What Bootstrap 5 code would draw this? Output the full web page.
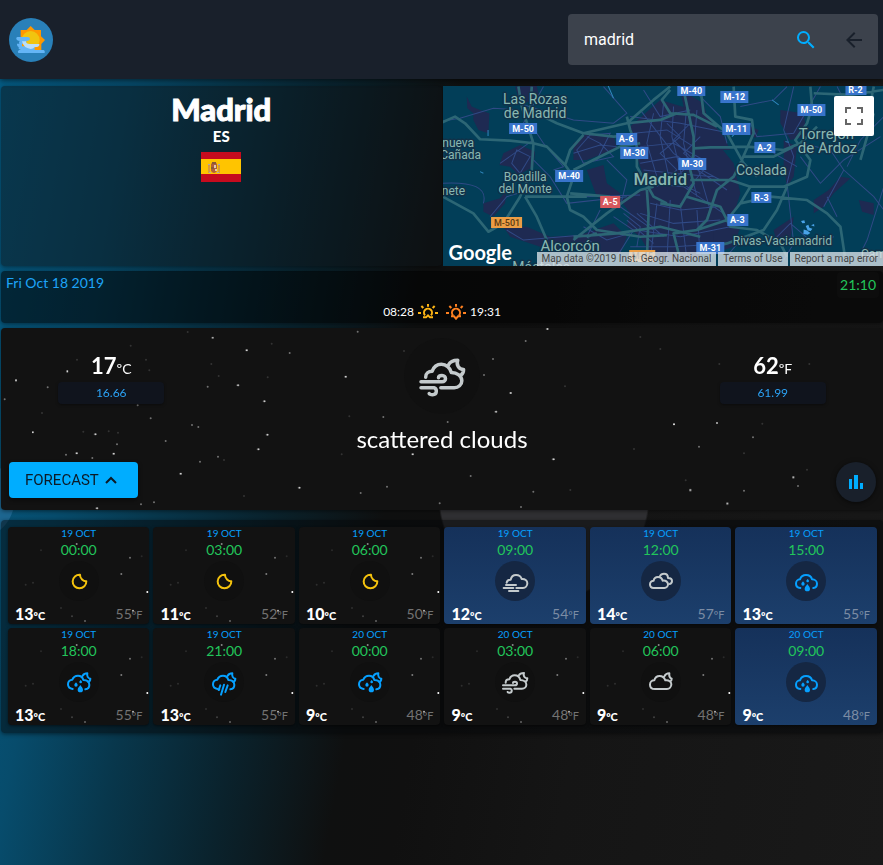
<!DOCTYPE html>
<html lang="en">
<head>
<meta charset="utf-8">
<meta name="viewport" content="width=device-width, initial-scale=1">
<title>Weather – Madrid</title>
<link href="https://cdn.jsdelivr.net/npm/bootstrap@5.3.0/dist/css/bootstrap.min.css" rel="stylesheet">
<style>
body{min-height:100vh;font-family:Lato,sans-serif;color:#fff;background:#0f0f0f}
.sky{padding-top:7px;background:
  radial-gradient(circle at 544px 416px,#303033 0,#303033 104px,transparent 106px),
  radial-gradient(circle at -26px 420px,#1d6690 0,#1d6690 40px,transparent 41px),
  linear-gradient(100deg,#055d86 0,#074c6c 130px,#08374c 230px,#0a222c 345px,#0f1010 455px,#101010 520px,#151515 680px,#191919 100%)}
.topbar{min-height:79px;background:#19202b;box-shadow:0 2px 5px rgba(0,0,0,.5);padding:14px 5px 14px 9px;position:relative}
.searchbox{width:310px;height:51px;background:#3c424c;border-radius:4px;padding:0 12px 0 16px}
.searchbox input{font:400 16px/24px Roboto,sans-serif;background:none;border:0;color:#fff;outline:0;min-width:0}
.plain{background:none;border:0;padding:0;line-height:0}
.panel{border-radius:4px;margin:0 0 5px 1px;box-shadow:0 1px 4px rgba(0,0,0,.5)}
.place-panel{background:rgba(12,18,22,.5);height:180px;padding-top:6px}
.city{font-size:31px;line-height:34px;font-weight:900;-webkit-text-stroke:1px #fff;margin:0}
.country{font-size:15px;line-height:20px;font-weight:900;margin:0 0 6px}
.mapbox{height:180px;position:relative;overflow:hidden;background:#023e58;font-family:Roboto,sans-serif;margin-left:1px}
.map-full{position:absolute;right:9px;top:10px;width:40px;height:40px;background:#fff;border:0;border-radius:2px;padding:0;line-height:0}
.map-logo{position:absolute;left:6px;bottom:2px;font:700 20px/24px Lato,sans-serif;color:#fff}
.map-credit{position:absolute;right:0;bottom:0;gap:2px;font-size:10px;line-height:14px;white-space:nowrap}
.map-credit>*{background:rgba(225,231,236,.76);color:#444;padding:0 5px;text-decoration:none}
.day-panel{background:rgba(0,0,0,.56);height:52px}
.today{font-size:14px;line-height:24px;color:#1ea4f8;padding-left:5px}
.clock{font-size:14px;line-height:26px;color:#22c55b;background:#0d0d0d;border-radius:4px;padding:0 3px;margin:1px 4px 0 0}
.suntimes{font-size:12px;line-height:18px;margin-top:5px;gap:4px}
.day-top{height:27px}
.night{background:#121212;position:relative;overflow:hidden}
.stars{position:absolute;left:0;top:0;width:882px;height:182px;pointer-events:none}
.stars circle,#tilestars circle{r:3px}
.tile .stars{width:142px;height:97px}
.now-panel{margin-bottom:10px}
.deg{font-size:22px;line-height:24px;font-weight:700;margin-top:26px}
.deg small{font-size:14px;font-weight:400}
.exact{width:48%;background:#10141d;border-radius:4px;color:#2ba2f5;font-size:12px;line-height:22px;margin-top:1px;box-shadow:0 1px 3px rgba(0,0,0,.4)}
.now-icon{width:76px;height:76px;border-radius:50%;background:#101010;margin-top:10px}
.summary{font-size:24px;line-height:36px;margin-top:7px}
.tools{padding:5px 7px 8px 8px}
.btn-forecast{background:#00adff;border:0;border-radius:4px;height:36px;padding:0 20px 0 16px;gap:5px;color:#0c1a26;font:400 15px/36px Roboto,sans-serif;box-shadow:0 2px 4px rgba(0,0,0,.5)}
.btn-stats{width:40px;height:40px;border-radius:50%;background:#19202b;border:0;padding:0;line-height:0;box-shadow:0 1px 5px rgba(0,0,0,.6)}
.forecast{background:rgba(4,6,8,.5);padding:7px 6px 8px 7px}
.tile{height:97px;border-radius:4px;text-align:center;box-shadow:0 1px 3px rgba(0,0,0,.5)}
.tile.day{background:linear-gradient(#15315a,#1c3f6c);position:relative}
.tile .on{font-size:10px;line-height:12px;color:#06a0ff}
.tile .at{font-size:14px;line-height:21px;color:#22c55b}
.disc{width:40px;height:40px;border-radius:50%;margin:1px auto 3px;background:#101010;line-height:0}
.day .disc{background:#152743}
.temps{padding:0 7px;line-height:20px;position:relative}
.tc{font-size:16px;font-weight:900}
.tc small,.tf small{font-size:11px}
.tf{font-size:14px;color:#737373}
.day .tf{color:#7b8ca4}
.ico{fill:none;stroke:currentColor;stroke-width:6;stroke-linecap:round;stroke-linejoin:round;position:relative}
.c-moon{color:#f4c20d}.c-rain{color:#06a0ff}.c-cloud{color:#c4cacc}
</style>
<script src="https://cdn.jsdelivr.net/npm/bootstrap@5.3.0/dist/js/bootstrap.bundle.min.js"></script>
</head>
<body class="d-flex flex-column">

<svg width="0" height="0" class="position-absolute" aria-hidden="true">
  <symbol id="moon" viewBox="0 0 120 120"><path d="M63 41A20.500 20.500 0 1 0 82 61C74 62 62 52 63 41z"/></symbol>
  <symbol id="fog" viewBox="0 0 120 120"><path d="M35 65C36 58 42 56 47 56C49 47 56 42 63 42C71 42 78 47 80 54C90 53 97 59 97 67C97 75 91 81 84 81H64M33 72H63M26 81H55M42 90H70"/></symbol>
  <symbol id="clouds" viewBox="0 0 120 120"><path d="M38 81C31 81 27 76 27 70C27 64 32 59 38 59C39 52 45 48 51 48C58 48 63 52 65 59C74 57 81 63 81 70C81 76 76 81 70 81ZM57 45C59 40 64 38 69 38C76 38 81 43 81 51C88 51 93 55 93 60C93 65 90 68 86 69"/></symbol>
  <symbol id="drops" viewBox="0 0 120 120"><g fill="currentColor" stroke="none"><path d="M64 69c3 5 8 9 8 14a8 8 0 0 1-16 0c0-5 5-9 8-14z"/><path d="M51 61c2 3 5 5 5 8a5 5 0 0 1-10 0c0-3 3-5 5-8z"/><path d="M65 54c2 2 4 4 4 6a4 4 0 0 1-8 0c0-2 2-4 4-6z"/></g></symbol>
  <symbol id="rain" viewBox="0 0 120 120"><path d="M43 81C35 80 30 75 30 68C30 61 35 55 42 55C45 46 52 42 60 42C69 42 76 47 78 55C87 55 93 61 93 68C93 75 89 80 82 81"/><use href="#drops"/></symbol>
  <symbol id="nightcloud" viewBox="0 0 120 120"><path d="M41 81C32 80 27 74 27 67C27 59 33 53 40 53C43 45 50 41 57 41C65 41 71 46 73 54C83 54 91 59 91 69C91 76 87 81 79 82M71 41C74 36 79 34 85 34C83 42 87 49 94 50C94 55 91 59 87 60"/></symbol>
  <symbol id="nightrain" viewBox="0 0 120 120"><use href="#nightcloud"/><use href="#drops"/></symbol>
  <symbol id="nightshower" viewBox="0 0 120 120"><use href="#nightcloud"/><path d="M49 70L44 84M60 68L51 98M71 70L64 90M46 80L45 84"/></symbol>
  <symbol id="nightplain" viewBox="0 0 120 120"><path d="M42 81C32 81 27 75 27 68C27 60 33 55 40 55C42 46 49 42 56 42C64 42 70 47 73 55C84 53 91 60 91 67C91 75 85 81 78 81ZM70 43C73 37 79 34 85 34C84 42 87 48 92 50C92 54 90 57 88 59"/></symbol>
  <symbol id="wind" viewBox="0 0 120 120"><path d="M32 62C32 56 37 52 43 52C46 44 52 40 59 40C67 40 74 46 76 54C86 54 94 60 94 68C94 75 88 80 81 80H58M24 70H60C68 70 68 59 60 59C56 59 54 60 54 63M24 80H46C52 82 52 92 44 92C41 92 39 92 38 90M71 41C74 35 80 33 87 33C84 41 89 49 97 49C97 53 95 57 92 59"/></symbol>
  <symbol id="tilestars" viewBox="24 51 426 291">
    <g fill="#fff"><circle cx="230" cy="102" r="3" opacity=".5"/><circle cx="390" cy="143" r="3" opacity=".4"/><circle cx="425" cy="139" r="4" opacity=".1"/><circle cx="364" cy="192" r="3" opacity=".45"/><circle cx="442" cy="246" r="3"/><circle cx="399" cy="302" r="3" opacity=".7"/><circle cx="255" cy="333" r="3" opacity=".35"/><circle cx="77" cy="224" r="4" opacity=".12"/><circle cx="99" cy="218" r="3" opacity=".12"/><circle cx="123" cy="121" r="3" opacity=".1"/><circle cx="183" cy="294" r="3" opacity=".12"/><circle cx="216" cy="319" r="3" opacity=".2"/></g>
  </symbol>
</svg>

<header class="topbar d-flex align-items-start justify-content-between">
  <a href="#" aria-label="Weather home" class="lh-1">
    <svg width="44" height="44" viewBox="27 51 132 132" class="d-block mt-1">
      <circle cx="93" cy="117" r="66" fill="#2980b9"/>
      <path fill="#ff9800" d="M92 75L104 87H123V106L135 117L124 129V147H62V87H80Z"/>
      <circle cx="92" cy="117" r="27" fill="#f1c40f"/>
      <path fill="#64b5f6" d="M52 108H84Q91 109 90 115Q88 120 79 120V128H66V136H104V147H131Q136 149 134 156H55Q51 151 57 147H64Q54 145 56 139H60Q50 137 51 128H58Q55 121 61 120Q47 118 49 110Z"/>
      <path fill="#bbdefb" d="M66 121H78Q77 130 92 129H118Q119 137 110 138H104Q100 144 92 144Q70 141 66 121Z"/>
      <path fill="#2980b9" d="M90 156h5v2h-5z"/>
    </svg>
  </a>
  <form class="searchbox d-flex align-items-center" role="search" onsubmit="return false">
    <input type="text" value="madrid" aria-label="City" class="flex-grow-1 p-0">
    <button type="submit" class="plain me-4" aria-label="Search"><svg width="24" height="24" viewBox="0 0 24 24" fill="#00adff"><path d="M15.500 14h-.79l-.28-.27A6.470 6.470 0 0 0 16 9.500 6.500 6.500 0 1 0 9.500 16c1.610 0 3.090-.59 4.230-1.570l.27.28v.79l5 4.990L20.490 19l-4.990-5zm-6 0C7.010 14 5 11.990 5 9.500S7.010 5 9.500 5 14 7.010 14 9.500 11.990 14 9.500 14z"/></svg></button>
    <button type="button" class="plain" aria-label="Back"><svg width="24" height="24" viewBox="0 0 24 24" fill="#19202b"><path d="M20 11H7.830l5.590-5.590L12 4l-8 8 8 8 1.410-1.410L7.830 13H20v-2z"/></svg></button>
  </form>
</header>

<main class="sky flex-grow-1">
  <section class="row g-0">
    <div class="col-6">
      <div class="panel place-panel text-center">
        <h1 class="city">Madrid</h1>
        <p class="country">ES</p>
        <svg width="40" height="30" viewBox="0 0 40 30" role="img" aria-label="Flag of Spain" class="d-block mx-auto">
          <path fill="#c60b1e" d="M0 0h40v30H0z"/><path fill="#ffc400" d="M0 7h40v15H0z"/>
          <path fill="#d99a3a" d="M7 13h2v8H7zM17 13h2v8h-2z"/><path fill="#b0603a" d="M10 12q3-4 6 0v7q-3 4-6 0z"/><path fill="#e3c9b4" d="M13 13h2v3h-2zM14 17h2v2h-2z"/><path fill="#8a5a3a" d="M11 10h4v2h-4zM10 15h3v2h-3z"/><path fill="#a8a8b8" d="M7 12h2v1H7zM17 12h2v1h-2zM8 20h2v1H8zM16 20h2v1h-2z"/>
        </svg>
      </div>
    </div>
    <div class="col-6">
      <div class="mapbox">
        <svg width="100%" height="180" viewBox="0 0 440 180" preserveAspectRatio="xMidYMid slice" class="d-block" role="img" aria-label="Map of Madrid">
          <path fill="#023e58" d="M0 0h440v180H0z"/>
          <g transform="translate(-3 -6) scale(.3333)">
            <path fill="#1e2a52" d="M80 50L95 80L120 90L148 100L145 160L115 150L100 120L100 100L82 85ZM225 20L290 18L300 60L240 70ZM190 220L240 195L285 215L280 260L235 285L210 260L178 255ZM400 190L440 160L520 165L530 205L440 240L400 240ZM440 270L490 255L500 310L540 340L520 380L470 350ZM570 140L660 60L760 90L800 150L880 250L900 340L860 470L760 540L640 540L600 470L560 440L570 400L540 360L620 320L590 230ZM130 370L180 355L200 330L195 370L160 410L130 395ZM190 440L260 440L330 470L420 465L520 430L560 470L540 520L300 500L210 470Z"/>
            <path fill="#1e2a52" d="M720 30L790 70L800 110L850 170L870 210L800 210L740 130ZM930 140L955 150L945 175L925 160ZM1020 90L1090 100L1100 170L1050 180L1020 130ZM1030 180L1070 200L1060 290L1040 320L1030 260ZM1165 330L1200 290L1230 295L1180 340L1150 380L1120 400L1120 360ZM1255 360L1300 370L1300 405L1265 395ZM1000 450L1060 410L1050 480L1010 495ZM820 440L900 440L880 500L820 520Z"/>
            <g fill="none" stroke="#304a86" stroke-width="3">
              <path d="M0 125L60 115L160 85L235 90M235 70L400 120L520 130L560 100L490 20M130 370Q150 300 0 310M280 180L180 250M270 130L310 190L370 260L340 270M280 240L330 290L380 370L560 350M430 350L600 345M200 450L250 480L430 465M250 130L310 20M150 410L200 350L300 320M480 390L440 470L500 540M610 30L660 110L750 90M440 170L480 190L520 230L430 250L410 210L450 165L510 160L470 240M400 220L480 195L530 200M230 210L270 230L240 280L215 250ZM500 240L560 300L540 380L640 450"/>
              <path d="M570 110L720 130L870 160M600 90L700 220L860 330M580 160L680 150L760 200M600 200L700 190L790 240M600 250L710 230L840 300M610 270L700 280L820 290M620 310L730 320L850 400M640 100L620 190L650 290M670 70L660 170L690 310M700 80L695 170L730 310M740 70L730 190L770 350M770 90L760 220L810 390M630 370L720 390L830 380M600 400L700 430L840 420M590 450L720 470L870 440M570 500L700 500L860 490M650 370L630 540M690 360L680 540M720 370L740 540M770 390L780 530M560 420L640 490M590 400L670 470M860 190L840 110L760 30M550 400L600 440L590 500M520 410L580 450L530 530M430 440L500 480L570 460M680 130L720 170L660 220L710 270L650 320M750 130L700 180L760 240L700 300L780 340M780 170L730 220L790 270L740 330"/>
              <path d="M900 80L1000 60L1040 20M930 130L950 170L1060 160L1100 90L1140 20M1060 20L1030 150L1060 230L1040 310L1060 490L1030 540M1080 230L1140 310L1210 240L1320 170M1150 380L1210 270L1300 350L1330 390M1210 270L1170 210L1080 190M1300 160L1230 100L1190 20M1330 320L1280 480L1250 540M1000 480L1050 430L1120 490L1180 470M850 540L900 480L970 450M1330 110L1260 180L1220 260M1160 350L1190 410M1000 220L1070 260"/>
            </g>
            <g fill="none" stroke="#2c6675" stroke-width="8" stroke-linejoin="round">
              <path d="M0 130L45 110L75 130L120 178L210 182L280 190L320 200L375 255L400 290L380 350L390 390L430 410L470 450L600 470L680 465M235 20L245 80L280 190L275 270L240 350L190 430L145 455L100 400L0 345M275 20L270 90L350 130L430 160L520 170L590 165M430 160L560 130L640 60L690 20M375 255L390 210L430 165M400 270L470 235L540 200L600 190M255 350L440 350M255 350L290 410L320 480M400 480L500 400L600 330L640 320M440 470L470 460M560 110L570 150L590 200L590 260L640 350L680 370M560 130L660 120L710 100M620 330L625 400L620 540M510 350L390 340M400 470L530 460L660 440L780 470"/>
              <path d="M690 30L665 60L690 100L760 105L830 140M730 30L760 170L760 220L750 270L760 310L720 380L660 370M780 20L790 100L860 160L910 250L950 290M880 20L885 110L935 120L940 160L900 250L880 290L830 330L800 420L770 450L700 460L720 540M760 205L810 202L920 200L1030 210L1080 190L1130 140M1110 20L1115 80L1100 130L1065 180L1110 240L1100 290L1030 320L930 320L900 370L860 420L770 450M750 300L870 300L930 320M900 370L990 350L1100 360L1160 400L1200 440L1215 540M1040 320L1010 390L970 450L860 490L820 500L810 540M740 350L840 380L870 440L950 450L1020 490L1040 530M910 230L1000 230L1060 200M1300 100L1260 240M1120 40L1230 45L1330 30M1300 20L1280 120"/>
            </g>
            <path fill="none" stroke="#2f87bd" stroke-width="3" d="M504 18L520 55M144 150V168M120 275L130 280M995 60L1015 75M875 170L885 160M1035 185L1045 187"/>
            <path fill="#4aa3e8" d="M1082 423l10-2 2 8-8 1zM1096 438l8-4 3 9 9 3-5 7-9-2zM1090 448l10 3 10 8-8 5-13-2zM1112 436l9-4 1 7z"/>
          </g>
          <g fill="#8ab8b2" stroke="#113249" stroke-width="3" paint-order="stroke" stroke-linejoin="round" font-family="Roboto, sans-serif" text-anchor="middle">
            <g font-size="14"><text x="92" y="18">Las Rozas</text><text x="92" y="32">de Madrid</text><text x="318" y="89">Coslada</text></g>
            <g font-size="12"><text x="82" y="95">Boadilla</text><text x="82" y="107">del Monte</text><text x="339" y="159">Rivas-Vaciamadrid</text></g>
            <g font-size="12" text-anchor="end"><text x="31" y="61">nueva</text><text x="38" y="73">Cañada</text><text x="22" y="109">nete</text></g>
            <g font-size="15"><text x="383" y="53">Torrejón</text><text x="384" y="67">de Ardoz</text><text x="127" y="165">Alcorcón</text></g>
            <text x="217" y="99" font-size="17" font-weight="500">Madrid</text>
            <text x="430" y="172" font-size="12">Cam</text><text x="98" y="186" font-size="14">Móstoles</text>
          </g>
          <g fill="#3874cb"><path d="M234-1h28v11h-28zM277 5h28v12h-28zM66 37h28v11H66zM279 37h28v12h-28zM173 47h21v12h-21zM177 61h28v12h-28zM235 72h28v12h-28zM112 84h28v12h-28zM311 56h21v11h-21zM308 106h20v11h-20zM284 128h21v12h-21zM253 156h28v12h-28zM354 18h28v12h-28zM402-2h21v11h-21z"/></g>
          <path fill="#d6575c" d="M157 110h20v12h-20z"/><path fill="#eb9d45" d="M48 131h31v11H48zM186 164h26v12h-26z"/>
          <g fill="#fff" font-family="Roboto, sans-serif" font-size="9" font-weight="700" text-anchor="middle">
            <text x="248" y="8">M-40</text><text x="291" y="14">M-12</text><text x="80" y="46">M-50</text><text x="293" y="46">M-11</text><text x="183" y="56">A-6</text><text x="191" y="70">M-30</text><text x="249" y="81">M-30</text><text x="126" y="93">M-40</text><text x="321" y="65">A-2</text><text x="318" y="115">R-3</text><text x="294" y="137">A-3</text><text x="267" y="165">M-31</text><text x="368" y="27">M-50</text><text x="412" y="7">R-2</text><text x="167" y="119">A-5</text>
            <text x="64" y="140" fill="#5a3a12" font-weight="500">M-501</text><text x="199" y="173" fill="#5a3a12" font-weight="500">M-45</text>
          </g>
        </svg>
        <span class="map-logo">Google</span>
        <div class="map-credit d-flex"><span>Map data ©2019 Inst. Geogr. Nacional</span><a href="#">Terms of Use</a><a href="#">Report a map error</a></div>
        <button type="button" class="map-full" aria-label="Toggle fullscreen"><svg width="18" height="18" viewBox="0 0 18 18" fill="none" stroke="#666" stroke-width="2"><path d="M1 6V1H6M12 1H17V6M17 12V17H12M6 17H1V12"/></svg></button>
      </div>
    </div>
  </section>

  <section class="panel day-panel">
    <div class="day-top d-flex justify-content-between align-items-start"><time class="today">Fri Oct 18 2019</time><time class="clock">21:10</time></div>
    <div class="suntimes d-flex justify-content-center align-items-center">
      <span>08:28</span>
      <svg width="20" height="16" viewBox="272 126 60 48" fill="none" stroke="#fdb515" stroke-width="6"><path d="M302 126v8M282 132l6 6M322 132l-6 6M272 153h9M323 153h9M293 160A12 12 0 1 1 311 160M287 166H296L302 160L308 166H317"/></svg>
      <svg width="20" height="16" viewBox="272 126 60 48" class="ms-1" fill="none" stroke="#ff8120" stroke-width="6"><path d="M302 126v8M282 132l6 6M322 132l-6 6M272 153h9M323 153h9M293 160A12 12 0 1 1 311 160M287 163H296L302 170L308 163H317"/></svg>
      <span>19:31</span>
    </div>
  </section>

  <section class="panel night now-panel">
    <svg class="stars" viewBox="3 204 2646 546" aria-hidden="true">
      <g fill="#fff" opacity=".9"><circle cx="48" cy="361" r="4"/><circle cx="202" cy="334" r="4"/><circle cx="638" cy="233" r="4" opacity=".8"/><circle cx="740" cy="271" r="4"/><circle cx="714" cy="376" r="5"/><circle cx="793" cy="424" r="4"/><circle cx="802" cy="524" r="4"/><circle cx="98" cy="517" r="4"/><circle cx="286" cy="523" r="4"/><circle cx="230" cy="580" r="4"/><circle cx="341" cy="581" r="4"/><circle cx="542" cy="641" r="4"/><circle cx="291" cy="745" r="4"/><circle cx="775" cy="568" r="3"/><circle cx="898" cy="683" r="3"/>
      <circle cx="1037" cy="350" r="4"/><circle cx="1532" cy="399" r="4"/><circle cx="1488" cy="455" r="4"/><circle cx="1642" cy="207" r="4"/><circle cx="1660" cy="598" r="4"/><circle cx="1238" cy="583" r="4"/><circle cx="1319" cy="255" r="3" opacity=".7"/><circle cx="2022" cy="493" r="5"/><circle cx="2151" cy="489" r="4" opacity=".8"/><circle cx="2071" cy="690" r="5"/><circle cx="2380" cy="652" r="3"/><circle cx="2182" cy="731" r="3"/></g>
      <g fill="#fff" opacity=".4"><circle cx="143" cy="382" r="4"/><circle cx="413" cy="436" r="4"/><circle cx="452" cy="475" r="3"/><circle cx="623" cy="380" r="3"/><circle cx="869" cy="279" r="3"/><circle cx="576" cy="495" r="4"/><circle cx="595" cy="501" r="4"/><circle cx="351" cy="553" r="3"/><circle cx="277" cy="594" r="3"/><circle cx="198" cy="584" r="3"/><circle cx="423" cy="733" r="3"/><circle cx="462" cy="727" r="3"/><circle cx="14" cy="418" r="3"/><circle cx="497" cy="543" r="3"/><circle cx="600" cy="605" r="3"/><circle cx="654" cy="590" r="3"/><circle cx="1073" cy="215" r="3"/><circle cx="1577" cy="243" r="3"/><circle cx="1479" cy="297" r="3"/><circle cx="1452" cy="345" r="3"/><circle cx="1343" cy="486" r="3"/><circle cx="1150" cy="471" r="3"/><circle cx="1161" cy="680" r="3"/><circle cx="1082" cy="699" r="3"/><circle cx="1412" cy="648" r="3"/><circle cx="1319" cy="730" r="3"/><circle cx="1563" cy="741" r="3"/><circle cx="1600" cy="695" r="3"/><circle cx="2259" cy="532" r="4"/><circle cx="2097" cy="560" r="3"/><circle cx="2232" cy="692" r="4"/><circle cx="2394" cy="678" r="4"/></g>
      <g fill="#fff" opacity=".14"><circle cx="231" cy="299" r="4"/><circle cx="438" cy="299" r="3"/><circle cx="392" cy="257" r="4"/><circle cx="563" cy="216" r="4"/><circle cx="634" cy="312" r="4"/><circle cx="656" cy="348" r="3"/><circle cx="815" cy="251" r="4"/><circle cx="803" cy="352" r="3"/><circle cx="448" cy="331" r="4"/><circle cx="126" cy="459" r="4"/><circle cx="326" cy="514" r="4"/><circle cx="354" cy="518" r="4"/><circle cx="672" cy="600" r="4"/><circle cx="732" cy="708" r="4"/><circle cx="250" cy="515" r="4"/><circle cx="1025" cy="583" r="4"/><circle cx="1048" cy="469" r="4"/><circle cx="1212" cy="273" r="4"/><circle cx="1695" cy="379" r="4"/><circle cx="1711" cy="690" r="4"/><circle cx="1921" cy="231" r="4"/><circle cx="1981" cy="267" r="4"/><circle cx="2158" cy="312" r="4"/><circle cx="1902" cy="567" r="4"/><circle cx="2287" cy="491" r="4"/><circle cx="2232" cy="580" r="4"/><circle cx="2421" cy="629" r="4"/><circle cx="2057" cy="661" r="4"/><circle cx="2428" cy="312" r="4"/></g>
    </svg>
    <div class="row g-0 text-center position-relative">
      <div class="col-3"><div class="deg">17<small>ºC</small></div><div class="exact mx-auto">16.66</div></div>
      <div class="col-6"><div class="now-icon mx-auto d-flex align-items-center justify-content-center"><svg class="ico c-cloud" width="70" height="70"><use href="#wind"/></svg></div><div class="summary">scattered clouds</div></div>
      <div class="col-3"><div class="deg">62<small>ºF</small></div><div class="exact mx-auto">61.99</div></div>
    </div>
    <div class="tools d-flex justify-content-between align-items-start position-relative">
      <button type="button" class="btn-forecast d-flex align-items-center">FORECAST<svg width="14" height="10" viewBox="0 0 14 10" fill="none" stroke="#0c1a26" stroke-width="2"><path d="M2 8L7 3L12 8"/></svg></button>
      <button type="button" class="btn-stats" aria-label="Charts"><svg width="16" height="16" viewBox="0 0 16 16" fill="#00adff"><path d="M1 5h3v10H1zM6 1h4v14H6zM12 9h3v6h-3z"/></svg></button>
    </div>
  </section>

  <section class="panel forecast">
    <div class="row g-1 row-cols-3 row-cols-md-6">
      <div class="col"><div class="tile night"><svg class="stars"><use href="#tilestars"/></svg><div class="on">19 OCT</div><div class="at">00:00</div><div class="disc c-moon"><svg class="ico" width="40" height="40"><use href="#moon"/></svg></div><div class="temps d-flex justify-content-between"><span class="tc">13<small>ºC</small></span><span class="tf">55<small>ºF</small></span></div></div></div>
      <div class="col"><div class="tile night"><svg class="stars"><use href="#tilestars"/></svg><div class="on">19 OCT</div><div class="at">03:00</div><div class="disc c-moon"><svg class="ico" width="40" height="40"><use href="#moon"/></svg></div><div class="temps d-flex justify-content-between"><span class="tc">11<small>ºC</small></span><span class="tf">52<small>ºF</small></span></div></div></div>
      <div class="col"><div class="tile night"><svg class="stars"><use href="#tilestars"/></svg><div class="on">19 OCT</div><div class="at">06:00</div><div class="disc c-moon"><svg class="ico" width="40" height="40"><use href="#moon"/></svg></div><div class="temps d-flex justify-content-between"><span class="tc">10<small>ºC</small></span><span class="tf">50<small>ºF</small></span></div></div></div>
      <div class="col"><div class="tile day"><div class="on">19 OCT</div><div class="at">09:00</div><div class="disc c-cloud"><svg class="ico" width="40" height="40"><use href="#fog"/></svg></div><div class="temps d-flex justify-content-between"><span class="tc">12<small>ºC</small></span><span class="tf">54<small>ºF</small></span></div></div></div>
      <div class="col"><div class="tile day"><div class="on">19 OCT</div><div class="at">12:00</div><div class="disc c-cloud"><svg class="ico" width="40" height="40"><use href="#clouds"/></svg></div><div class="temps d-flex justify-content-between"><span class="tc">14<small>ºC</small></span><span class="tf">57<small>ºF</small></span></div></div></div>
      <div class="col"><div class="tile day"><div class="on">19 OCT</div><div class="at">15:00</div><div class="disc c-rain"><svg class="ico" width="40" height="40"><use href="#rain"/></svg></div><div class="temps d-flex justify-content-between"><span class="tc">13<small>ºC</small></span><span class="tf">55<small>ºF</small></span></div></div></div>
      <div class="col"><div class="tile night"><svg class="stars"><use href="#tilestars"/></svg><div class="on">19 OCT</div><div class="at">18:00</div><div class="disc c-rain"><svg class="ico" width="40" height="40"><use href="#nightrain"/></svg></div><div class="temps d-flex justify-content-between"><span class="tc">13<small>ºC</small></span><span class="tf">55<small>ºF</small></span></div></div></div>
      <div class="col"><div class="tile night"><svg class="stars"><use href="#tilestars"/></svg><div class="on">19 OCT</div><div class="at">21:00</div><div class="disc c-rain"><svg class="ico" width="40" height="40"><use href="#nightshower"/></svg></div><div class="temps d-flex justify-content-between"><span class="tc">13<small>ºC</small></span><span class="tf">55<small>ºF</small></span></div></div></div>
      <div class="col"><div class="tile night"><svg class="stars"><use href="#tilestars"/></svg><div class="on">20 OCT</div><div class="at">00:00</div><div class="disc c-rain"><svg class="ico" width="40" height="40"><use href="#nightrain"/></svg></div><div class="temps d-flex justify-content-between"><span class="tc">9<small>ºC</small></span><span class="tf">48<small>ºF</small></span></div></div></div>
      <div class="col"><div class="tile night"><svg class="stars"><use href="#tilestars"/></svg><div class="on">20 OCT</div><div class="at">03:00</div><div class="disc c-cloud"><svg class="ico" width="40" height="40"><use href="#wind"/></svg></div><div class="temps d-flex justify-content-between"><span class="tc">9<small>ºC</small></span><span class="tf">48<small>ºF</small></span></div></div></div>
      <div class="col"><div class="tile night"><svg class="stars"><use href="#tilestars"/></svg><div class="on">20 OCT</div><div class="at">06:00</div><div class="disc c-cloud"><svg class="ico" width="40" height="40"><use href="#nightplain"/></svg></div><div class="temps d-flex justify-content-between"><span class="tc">9<small>ºC</small></span><span class="tf">48<small>ºF</small></span></div></div></div>
      <div class="col"><div class="tile day"><div class="on">20 OCT</div><div class="at">09:00</div><div class="disc c-rain"><svg class="ico" width="40" height="40"><use href="#rain"/></svg></div><div class="temps d-flex justify-content-between"><span class="tc">9<small>ºC</small></span><span class="tf">48<small>ºF</small></span></div></div></div>
    </div>
  </section>
</main>
</body>
</html>
